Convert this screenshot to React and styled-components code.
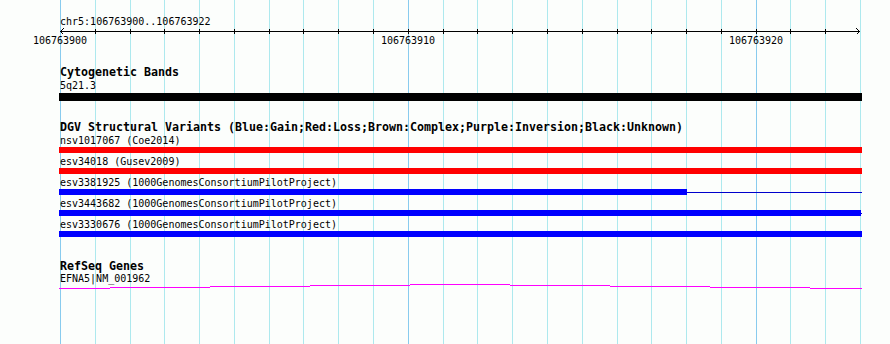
import React from "react";
import styled, { createGlobalStyle } from "styled-components";

const START = 106763900;
const END = 106763922;
const LEFT = 60;
const SPAN = 800;
const BASES = END - START + 1;

const xOf = (i) => Math.round(LEFT + (i * SPAN) / BASES);

const variants = [
  { name: "nsv1017067", source: "Coe2014", color: "#ff0000", fill: 803 },
  { name: "esv34018", source: "Gusev2009", color: "#ff0000", fill: 803 },
  { name: "esv3381925", source: "1000GenomesConsortiumPilotProject", color: "#0000ff", fill: 628 },
  { name: "esv3443682", source: "1000GenomesConsortiumPilotProject", color: "#0000ff", fill: 802 },
  { name: "esv3330676", source: "1000GenomesConsortiumPilotProject", color: "#0000ff", fill: 803 },
];

// intron "hat" of the gene, drawn as 1px steps (page x from, page x to, page y)
const geneSteps = [
  [59, 110, 288],
  [110, 210, 287],
  [210, 310, 286],
  [310, 410, 285],
  [410, 510, 284],
  [510, 610, 285],
  [610, 710, 286],
  [710, 810, 287],
  [810, 862, 288],
];

const GlobalStyle = createGlobalStyle`
  body {
    margin: 0;
    background: #fcfefc;
  }
`;

const Canvas = styled.div`
  position: relative;
  width: 890px;
  height: 344px;
  overflow: hidden;
  background: #fcfefc;
  font-family: "DejaVu Sans Mono", "Liberation Mono", monospace;
  color: #000;
`;

const GridLayer = styled.div`
  position: absolute;
  inset: 0;
  z-index: 0;
`;

const GridLine = styled.div`
  position: absolute;
  top: 0;
  bottom: 0;
  width: 1px;
  background: ${(p) => (p.$major ? "#88cbee" : "#ade9ee")};
`;

const Content = styled.div`
  position: relative;
  z-index: 1;
  display: flex;
  flex-direction: column;
`;

const RulerTitle = styled.div`
  margin: 15px 0 0 ${LEFT}px;
  font-size: 10px;
  line-height: 13px;
  white-space: pre;
`;

const RulerSvg = styled.svg`
  display: block;
  width: 890px;
  height: 18px;
  font-family: "DejaVu Sans Mono", "Liberation Mono", monospace;
  font-size: 10px;
`;

const Track = styled.section`
  display: flex;
  flex-direction: column;
  padding-left: ${LEFT}px;
  margin-top: ${(p) => p.$gap}px;
`;

const TrackTitle = styled.div`
  font-size: 11.63px;
  font-weight: bold;
  line-height: 13px;
  white-space: pre;
`;

const FeatureLabel = styled.div`
  font-size: 10px;
  line-height: ${(p) => p.$lh || 13}px;
  white-space: pre;
`;

const BarRow = styled.div`
  display: flex;
  align-items: center;
  width: 803px;
  height: ${(p) => p.$h}px;
  margin: ${(p) => p.$mt || 0}px 0 0 -1px;
`;

const BarFill = styled.div`
  height: 100%;
  flex: none;
  background: ${(p) => p.$color};
`;

const Connector = styled.div`
  flex: 1;
  height: 1px;
  background: #0000cc;
`;

const VariantRow = styled.div`
  display: flex;
  flex-direction: column;
  padding-bottom: 2px;
`;

const GeneSvg = styled.svg`
  display: block;
  width: 803px;
  height: 6px;
  margin-left: -1px;
`;

const Ruler = () => {
  const ticks = Array.from({ length: BASES - 1 }, (_, i) => xOf(i + 1));
  const labels = [0, 10, 20];
  return (
    <RulerSvg viewBox="0 0 890 18" shapeRendering="crispEdges">
      <line x1={LEFT} y1={3.5} x2={LEFT + SPAN} y2={3.5} stroke="#000" />
      {ticks.map((x) => (
        <line key={x} x1={x + 0.5} y1={1} x2={x + 0.5} y2={6} stroke="#000" />
      ))}
      <path d="M63.5 0.5 L60.5 3.5 L63.5 6.5" fill="none" stroke="#000" />
      <path d="M856.5 0.5 L859.5 3.5 L856.5 6.5" fill="none" stroke="#000" />
      {labels.map((i) => (
        <text key={i} x={xOf(i)} y={16} textAnchor="middle" fill="#000">
          {START + i}
        </text>
      ))}
    </RulerSvg>
  );
};

const App = () => {
  const grid = Array.from({ length: BASES + 1 }, (_, i) => i);
  return (
    <>
      <GlobalStyle />
      <Canvas>
        <GridLayer>
          {grid.map((i) => (
            <GridLine key={i} $major={i % 10 === 0} style={{ left: xOf(i) }} />
          ))}
        </GridLayer>
        <Content>
          <RulerTitle>chr5:{START}..{END}</RulerTitle>
          <Ruler />

          <Track $gap={20}>
            <TrackTitle>Cytogenetic Bands</TrackTitle>
            <FeatureLabel>5q21.3</FeatureLabel>
            <BarRow $h={8} $mt={1}>
              <BarFill $color="#000" style={{ width: 803 }} />
            </BarRow>
          </Track>

          <Track $gap={20}>
            <TrackTitle>
              DGV Structural Variants (Blue:Gain;Red:Loss;Brown:Complex;Purple:Inversion;Black:Unknown)
            </TrackTitle>
            {variants.map((v) => (
              <VariantRow key={v.name}>
                <FeatureLabel>
                  {v.name} ({v.source})
                </FeatureLabel>
                <BarRow $h={6}>
                  <BarFill $color={v.color} style={{ width: v.fill }} />
                  {v.fill < 803 && <Connector />}
                </BarRow>
              </VariantRow>
            ))}
          </Track>

          <Track $gap={21}>
            <TrackTitle>RefSeq Genes</TrackTitle>
            <FeatureLabel $lh={11}>EFNA5|NM_001962</FeatureLabel>
            <GeneSvg viewBox="0 0 803 6" shapeRendering="crispEdges">
              {geneSteps.map(([a, b, y]) => (
                <rect key={a} x={a - 59} y={y - 284} width={b - a} height={1} fill="#ff00ff" />
              ))}
            </GeneSvg>
          </Track>
        </Content>
      </Canvas>
    </>
  );
};

export default App;
